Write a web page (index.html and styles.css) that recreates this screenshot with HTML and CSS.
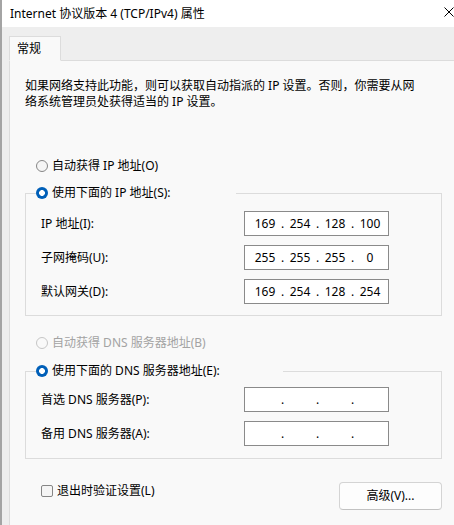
FILE: index.html
```html
<!DOCTYPE html>
<html lang="zh-CN">
<head>
<meta charset="utf-8">
<title>Internet 协议版本 4 (TCP/IPv4) 属性</title>
<link rel="stylesheet" href="styles.css">
</head>
<body>
<div class="desktop">
  <div class="edge"></div>
  <div class="window">
    <div class="titlebar">
      <span class="title">Internet 协议版本 4 (TCP/IPv4) 属性</span>
      <svg class="close" width="10" height="10" viewBox="0 0 10 10"><path d="M0.5 0.5 L9.5 9.5 M9.5 0.5 L0.5 9.5" stroke="#000" stroke-width="1" fill="none"/></svg>
    </div>
    <div class="tabstrip">
      <div class="tab">常规</div>
    </div>
    <div class="panel">
      <div class="content">
        <p class="intro">如果网络支持此功能，则可以获取自动指派的 IP 设置。否则，你需要从网<br>络系统管理员处获得适当的 IP 设置。</p>

        <div class="option first">
          <span class="radio"></span><span>自动获得 IP 地址(O)</span>
        </div>

        <fieldset class="group group-ip">
          <legend class="legend legend-ip">
            <span class="option"><span class="radio checked"></span><span>使用下面的 IP 地址(S):</span></span>
          </legend>
          <div class="rows">
            <div class="row">
              <span class="field-label">IP 地址(I):</span>
              <div class="ipbox"><span class="oct">169</span><span class="dot">.</span><span class="oct">254</span><span class="dot">.</span><span class="oct">128</span><span class="dot">.</span><span class="oct">100</span></div>
            </div>
            <div class="row">
              <span class="field-label">子网掩码(U):</span>
              <div class="ipbox"><span class="oct">255</span><span class="dot">.</span><span class="oct">255</span><span class="dot">.</span><span class="oct">255</span><span class="dot">.</span><span class="oct">0</span></div>
            </div>
            <div class="row">
              <span class="field-label">默认网关(D):</span>
              <div class="ipbox"><span class="oct">169</span><span class="dot">.</span><span class="oct">254</span><span class="dot">.</span><span class="oct">128</span><span class="dot">.</span><span class="oct">254</span></div>
            </div>
          </div>
        </fieldset>

        <div class="option disabled second">
          <span class="radio"></span><span>自动获得 DNS 服务器地址(B)</span>
        </div>

        <fieldset class="group group-dns">
          <legend class="legend legend-dns">
            <span class="option"><span class="radio checked"></span><span>使用下面的 DNS 服务器地址(E):</span></span>
          </legend>
          <div class="rows">
            <div class="row">
              <span class="field-label">首选 DNS 服务器(P):</span>
              <div class="ipbox"><span class="oct"></span><span class="dot">.</span><span class="oct"></span><span class="dot">.</span><span class="oct"></span><span class="dot">.</span><span class="oct"></span></div>
            </div>
            <div class="row">
              <span class="field-label">备用 DNS 服务器(A):</span>
              <div class="ipbox"><span class="oct"></span><span class="dot">.</span><span class="oct"></span><span class="dot">.</span><span class="oct"></span><span class="dot">.</span><span class="oct"></span></div>
            </div>
          </div>
        </fieldset>

        <div class="footer">
          <div class="option check-row">
            <span class="checkbox"></span><span>退出时验证设置(L)</span>
          </div>
          <button class="button" type="button">高级(V)...</button>
        </div>
      </div>
    </div>
  </div>
</div>
</body>
</html>
```

FILE: styles.css
```css
* { box-sizing: border-box; }

html, body {
  margin: 0;
  padding: 0;
  height: 100%;
  overflow: hidden;
}

body {
  font-family: "Noto Sans", "Noto Sans CJK SC", sans-serif;
  font-size: 12px;
  line-height: 16px;
  color: #000;
  background: #eeeeee;
}

.desktop {
  display: flex;
  height: 525px;
}

.edge {
  width: 2px;
  flex: none;
  background: #a4a4a4;
}

.window {
  flex: 1;
  display: flex;
  flex-direction: column;
  background: #eeeeee;
  min-width: 0;
}

.titlebar {
  height: 27px;
  background: #ffffff;
  display: flex;
  align-items: center;
  justify-content: space-between;
  padding-left: 8px;
}

.title {
  white-space: nowrap;
}

.close {
  flex: none;
  margin-bottom: 3px;
}

.tabstrip {
  height: 33px;
  display: flex;
  align-items: flex-end;
  padding-left: 7px;
}

.tab {
  position: relative;
  z-index: 1;
  width: 52px;
  height: 25px;
  margin-bottom: -1px;
  padding: 4px 0 0 7px;
  background: #f9f9f9;
  border: 1px solid #dcdcdc;
  border-bottom: 1px solid #f9f9f9;
}

.panel {
  flex: 1;
  margin-left: 7px;
  background: #f9f9f9;
  border-left: 1px solid #dcdcdc;
  border-top: 1px solid #dcdcdc;
  padding-left: 15px;
}

.content {
  width: 417px;
  display: flex;
  flex-direction: column;
}

.intro {
  margin: 17px 0 0 0;
  white-space: nowrap;
}

.option {
  display: flex;
  align-items: center;
  height: 16px;
  gap: 4px;
  white-space: nowrap;
}

.option.first {
  margin: 48px 0 0 11px;
}

.option.second {
  margin: 19px 0 0 11px;
}

.option.disabled {
  color: #a3a3a3;
}

.radio {
  width: 12px;
  height: 12px;
  flex: none;
  border-radius: 50%;
  border: 1px solid #868686;
  background: #f5f5f5;
}

.disabled .radio {
  border-color: #c6c6c6;
  background: #f9f9f9;
}

.radio.checked {
  border: none;
  background: radial-gradient(circle at center, #ffffff 0, #ffffff 2.6px, #005fb8 3.2px);
}

.group {
  margin: 11px 0 0 0;
  padding: 10px 0 11px 0;
  border: 1px solid #dcdcdc;
  min-width: 0;
}

.group-dns {
  margin-top: 12px;
  padding-top: 8px;
  padding-bottom: 12px;
}

.legend {
  padding: 0;
  margin-left: 10px;
  height: 16px;
}

.legend-ip { width: 200px; }
.legend-dns { width: 247px; }

.rows {
  display: flex;
  flex-direction: column;
  gap: 9px;
}

.row {
  display: flex;
  align-items: center;
  height: 25px;
}

.field-label {
  width: 218px;
  padding-left: 15px;
  white-space: nowrap;
}

.ipbox {
  width: 145px;
  height: 25px;
  background: #ffffff;
  border: 1px solid #8a8a8a;
  display: flex;
  align-items: center;
  padding-left: 6px;
}

.oct {
  width: 28px;
  text-align: center;
}

.dot {
  width: 7px;
  text-align: center;
}

.footer {
  margin-top: 23px;
  display: flex;
  justify-content: space-between;
  align-items: flex-start;
}

.check-row {
  margin: 1px 0 0 16px;
}

.checkbox {
  width: 12px;
  height: 12px;
  flex: none;
  border: 1px solid #868686;
  border-radius: 2px;
  background: #f5f5f5;
}

.button {
  width: 103px;
  height: 28px;
  padding: 0;
  font: inherit;
  color: #000;
  background: #fdfdfd;
  border: 1px solid #d4d4d4;
  border-bottom-color: #c2c2c2;
  border-radius: 4px;
}
```
